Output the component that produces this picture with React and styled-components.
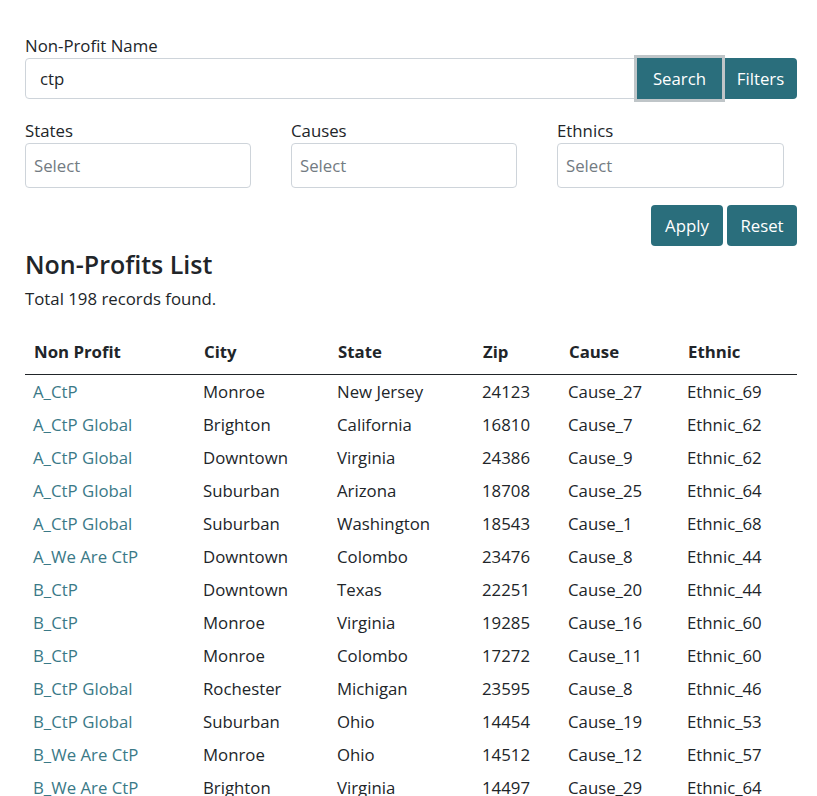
import React from 'react';
import styled, { createGlobalStyle } from 'styled-components';

const GlobalStyle = createGlobalStyle`
  body {
    margin: 0;
    background: #fff;
    color: #212529;
    font-family: "Open Sans", "Noto Sans", sans-serif;
    font-size: 16.8px;
    line-height: 24px;
  }
  * { box-sizing: border-box; }
`;

const Page = styled.div`
  padding: 34px 20px 0 25px;
`;

const Label = styled.label`
  display: block;
  line-height: 24px;
`;

const SearchGroup = styled.div`
  display: flex;
  align-items: stretch;
  height: 41px;
`;

const NameInput = styled.input`
  flex: 1;
  min-width: 0;
  border: 1px solid #ced4da;
  border-radius: 4px 0 0 4px;
  padding: 0 14px;
  font: inherit;
  color: #212529;
  outline: none;
`;

const Button = styled.button`
  background: #2a6e7c;
  color: #fff;
  border: 0;
  font: inherit;
  height: 41px;
  width: ${p => p.$w}px;
  padding: 0;
  border-radius: ${p => p.$radius || '4px'};
  cursor: pointer;
  position: relative;
  ${p => p.$focused && `
    outline: 3px solid #bfc5c8;
    z-index: 1;
    margin-left: -3px;
  `}
`;

const FilterGrid = styled.div`
  display: grid;
  grid-template-columns: 226px 226px 227px;
  column-gap: 40px;
  margin-top: 20px;
`;

const Select = styled.div`
  height: 45px;
  border: 1px solid #ced4da;
  border-radius: 4px;
  display: flex;
  align-items: center;
  padding: 0 8px;
  color: #737b82;
`;

const Actions = styled.div`
  display: flex;
  justify-content: flex-end;
  gap: 4px;
  margin-top: 17px;
`;

const Heading = styled.h2`
  margin: 4px 0 0;
  font-size: 25px;
  font-weight: 600;
  line-height: 29px;
`;

const Total = styled.p`
  margin: 8px 0 0;
`;

const Table = styled.table`
  width: 100%;
  margin-top: 20px;
  border-collapse: collapse;
  table-layout: fixed;
`;

const Th = styled.th`
  width: ${p => p.$w}px;
  text-align: left;
  font-weight: 700;
  padding: 9px 9px 10px;
  border-bottom: 1px solid #212529;
`;

const Td = styled.td`
  padding: 5px 8px 4px 8px;
  line-height: 24px;
  white-space: nowrap;
  color: ${p => (p.$link ? '#3a7987' : '#212529')};
`;

const columns = [
  ['Non Profit', 170],
  ['City', 134],
  ['State', 145],
  ['Zip', 86],
  ['Cause', 119],
  ['Ethnic', 118],
];

const rows = [
  ['A_CtP', 'Monroe', 'New Jersey', '24123', 'Cause_27', 'Ethnic_69'],
  ['A_CtP Global', 'Brighton', 'California', '16810', 'Cause_7', 'Ethnic_62'],
  ['A_CtP Global', 'Downtown', 'Virginia', '24386', 'Cause_9', 'Ethnic_62'],
  ['A_CtP Global', 'Suburban', 'Arizona', '18708', 'Cause_25', 'Ethnic_64'],
  ['A_CtP Global', 'Suburban', 'Washington', '18543', 'Cause_1', 'Ethnic_68'],
  ['A_We Are CtP', 'Downtown', 'Colombo', '23476', 'Cause_8', 'Ethnic_44'],
  ['B_CtP', 'Downtown', 'Texas', '22251', 'Cause_20', 'Ethnic_44'],
  ['B_CtP', 'Monroe', 'Virginia', '19285', 'Cause_16', 'Ethnic_60'],
  ['B_CtP', 'Monroe', 'Colombo', '17272', 'Cause_11', 'Ethnic_60'],
  ['B_CtP Global', 'Rochester', 'Michigan', '23595', 'Cause_8', 'Ethnic_46'],
  ['B_CtP Global', 'Suburban', 'Ohio', '14454', 'Cause_19', 'Ethnic_53'],
  ['B_We Are CtP', 'Monroe', 'Ohio', '14512', 'Cause_12', 'Ethnic_57'],
  ['B_We Are CtP', 'Brighton', 'Virginia', '14497', 'Cause_29', 'Ethnic_64'],
];

const filters = ['States', 'Causes', 'Ethnics'];

export default function App() {
  return (
    <Page>
      <GlobalStyle />
      <Label htmlFor="np-name">Non-Profit Name</Label>
      <SearchGroup>
        <NameInput id="np-name" defaultValue="ctp" />
        <Button $focused $w={85} $radius="0">Search</Button>
        <Button $w={73} $radius="0 4px 4px 0" style={{ marginLeft: 2 }}>Filters</Button>
      </SearchGroup>

      <FilterGrid>
        {filters.map(f => (
          <div key={f}>
            <Label>{f}</Label>
            <Select>Select</Select>
          </div>
        ))}
      </FilterGrid>

      <Actions>
        <Button $w={72}>Apply</Button>
        <Button $w={70}>Reset</Button>
      </Actions>

      <Heading>Non-Profits List</Heading>
      <Total>Total 198 records found.</Total>

      <Table>
        <thead>
          <tr>
            {columns.map(([name, w]) => (
              <Th key={name} $w={w}>{name}</Th>
            ))}
          </tr>
        </thead>
        <tbody>
          {rows.map((r, i) => (
            <tr key={i}>
              {r.map((cell, j) => (
                <Td key={j} $link={j === 0}>{cell}</Td>
              ))}
            </tr>
          ))}
        </tbody>
      </Table>
    </Page>
  );
}
